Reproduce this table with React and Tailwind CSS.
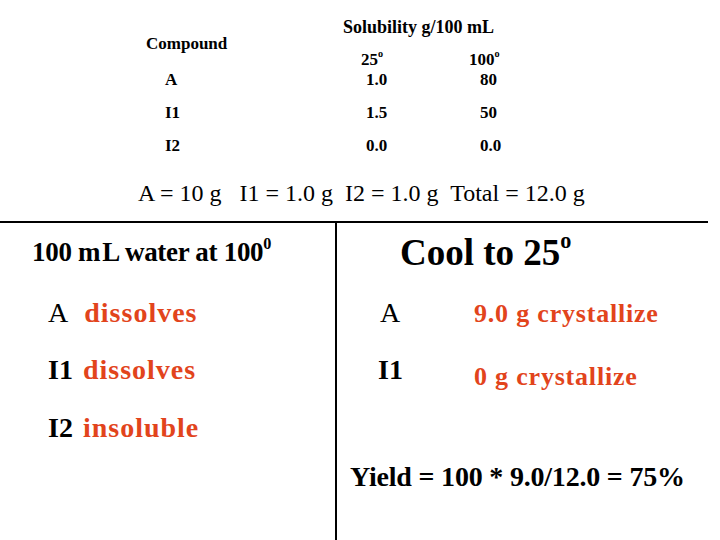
const RED = 'text-[#e2441c]';

function Deg({ children = 'o' }) {
  return <sup className="text-[0.6em] top-[-0.75em]">{children}</sup>;
}

const ROWS = [
  ['A', '1.0', '80'],
  ['I1', '1.5', '50'],
  ['I2', '0.0', '0.0'],
];

export default function App() {
  return (
    <div className="w-[720px] h-[540px] bg-white text-black overflow-hidden font-['Liberation_Serif',serif]">
      {/* solubility table */}
      <div className="font-bold text-[17px]">
        <div className="pt-[18px] pl-[343px] leading-[18px] text-[18px]">Solubility g/100 mL</div>
        <div className="pl-[146px] leading-[16px]">Compound</div>
        <div className="flex pl-[361px] leading-[16px]">
          <span className="w-[108px]">25<Deg /></span>
          <span>100<Deg /></span>
        </div>
        <div className="flex flex-col gap-[9px]">
          {ROWS.map(([c, a, b]) => (
            <div key={c} className="flex h-[24px] items-center pl-[165px]">
              <span className="w-[201px]">{c}</span>
              <span className="w-[114px]">{a}</span>
              <span>{b}</span>
            </div>
          ))}
        </div>
      </div>

      <div className="mt-[20px] pl-[138px] text-[24px] leading-[30px] whitespace-pre">
        {'A = 10 g   I1 = 1.0 g  I2 = 1.0 g  Total = 12.0 g'}
      </div>

      {/* two columns */}
      <div className="mt-[13px] w-[708px] border-t-2 border-black flex h-[320px]">
        <div className="w-[337px] border-r-2 border-black">
          <div className="pt-[14px] pl-[32px] font-bold text-[27px] leading-[30px] tracking-[-0.3px]">
            100 m<span className="ml-[2px]">L</span> water at 100<Deg>0</Deg>
          </div>
          <div className="mt-[28px] pl-[48px] text-[28px] leading-[36px] h-[36px]">
            A<span className={`ml-[16px] font-bold tracking-[1px] ${RED}`}>dissolves</span>
          </div>
          <div className="mt-[21px] pl-[48px] text-[28px] leading-[36px] h-[36px] font-bold">
            I1<span className={`ml-[10px] tracking-[1px] ${RED}`}>dissolves</span>
          </div>
          <div className="mt-[22px] pl-[48px] text-[28px] leading-[36px] h-[36px] font-bold">
            I2<span className={`ml-[10px] tracking-[1px] ${RED}`}>insoluble</span>
          </div>
        </div>

        <div className="flex-1">
          <div className="pt-[10px] pl-[63px] font-bold text-[37px] leading-[40px]">
            Cool to 25<Deg />
          </div>
          <div className="mt-[22px] pl-[43px] flex items-baseline text-[28px] leading-[36px] h-[36px]">
            <span className="w-[94px]">A</span>
            <span className={`font-bold text-[26px] tracking-[0.8px] ${RED}`}>9.0 g crystallize</span>
          </div>
          <div className="mt-[21px] pl-[41px] flex items-baseline text-[28px] leading-[36px] h-[36px] font-bold">
            <span className="w-[96px]">I1</span>
            <span className={`text-[26px] tracking-[0.8px] ${RED} translate-y-[6px]`}>0 g crystallize</span>
          </div>
          <div className="mt-[72px] pl-[13px] font-bold text-[28px] leading-[34px] tracking-[-0.2px]">
            Yield = 100 * 9.0/12.0 = 75%
          </div>
        </div>
      </div>
    </div>
  );
}
